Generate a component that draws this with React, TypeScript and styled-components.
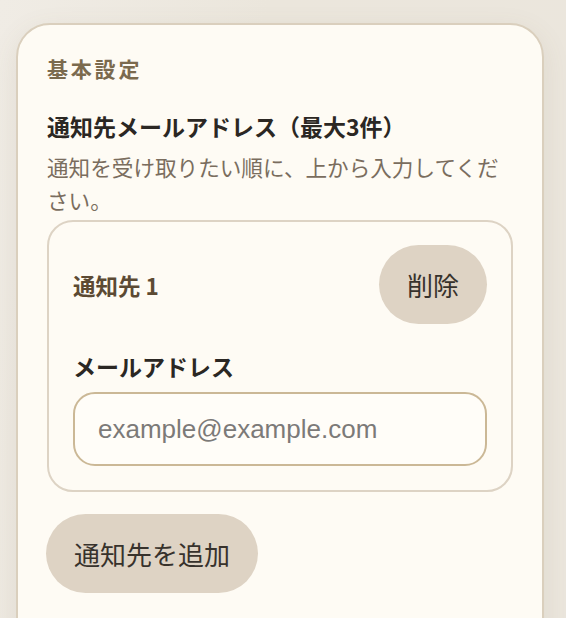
import React from "react";
import styled, { createGlobalStyle } from "styled-components";

const GlobalStyle = createGlobalStyle`
  html, body {
    margin: 0;
    padding: 0;
    background: linear-gradient(100deg, #f0ece5 0%, #ebe6dc 40%, #ebe6dd 100%);
    font-family: "Noto Sans CJK JP", "Noto Sans", sans-serif;
    overflow: hidden;
  }
  * { box-sizing: border-box; }
`;

const Page = styled.div`
  height: 618px;
  padding: 23px 0 0 16px;
`;

const Card = styled.section`
  width: 528px;
  min-height: 700px;
  background: #fefbf4;
  border: 2px solid #dacfbd;
  border-radius: 34px;
  padding: 28px 28px 0 29px;
  box-shadow: 0 8px 28px rgba(120, 100, 70, 0.10);
`;

const SectionLabel = styled.h2`
  margin: 0;
  font-size: 21px;
  line-height: 30px;
  font-weight: 700;
  letter-spacing: 2.8px;
  color: #7b6a4e;
`;

const Title = styled.h3`
  margin: 27px 0 0;
  font-size: 23px;
  line-height: 32px;
  font-weight: 700;
  color: #2b2723;
`;

const Help = styled.p`
  margin: 8px 0 0;
  font-size: 21.6px;
  line-height: 33px;
  font-weight: 400;
  color: #7a6d5e;
`;

const EntryCard = styled.div`
  margin-top: 4px;
  width: 466px;
  border: 2px solid #ddd3c4;
  border-radius: 26px;
  padding: 23px 24px 24px 24px;
`;

const EntryHeader = styled.div`
  display: flex;
  align-items: center;
  justify-content: space-between;
`;

const EntryName = styled.span`
  font-size: 22.5px;
  font-weight: 700;
  color: #5c4a33;
`;

const PillButton = styled.button`
  height: 79px;
  padding: 0 28px;
  border: none;
  border-radius: 40px;
  background: #ded3c4;
  color: #37322c;
  font-family: "Noto Sans CJK JP", sans-serif;
  font-size: 26px;
  font-weight: 400;
  line-height: 1;
  cursor: pointer;
`;

const FieldLabel = styled.label`
  display: block;
  margin-top: 26px;
  font-size: 23px;
  line-height: 32px;
  font-weight: 700;
  color: #2b2723;
`;

const EmailInput = styled.input`
  display: block;
  margin-top: 10px;
  width: 414px;
  height: 74px;
  border: 2px solid #cbb896;
  border-radius: 22px;
  background: #fffdf8;
  padding: 0 23px;
  font-family: "Liberation Sans", Arial, sans-serif;
  font-size: 26px;
  color: #2b2723;
  outline: none;
  &::placeholder {
    color: #7c7a78;
  }
`;

const AddRow = styled.div`
  margin-top: 22px;
  margin-left: -1px;
`;

export default function App() {
  return (
    <>
      <GlobalStyle />
      <Page>
        <Card>
          <SectionLabel>基本設定</SectionLabel>
          <Title>通知先メールアドレス（最大3件）</Title>
          <Help>通知を受け取りたい順に、上から入力してください。</Help>
          <EntryCard>
            <EntryHeader>
              <EntryName>通知先 1</EntryName>
              <PillButton type="button">削除</PillButton>
            </EntryHeader>
            <FieldLabel htmlFor="email-1">メールアドレス</FieldLabel>
            <EmailInput id="email-1" type="email" placeholder="example@example.com" />
          </EntryCard>
          <AddRow>
            <PillButton type="button">通知先を追加</PillButton>
          </AddRow>
        </Card>
      </Page>
    </>
  );
}
